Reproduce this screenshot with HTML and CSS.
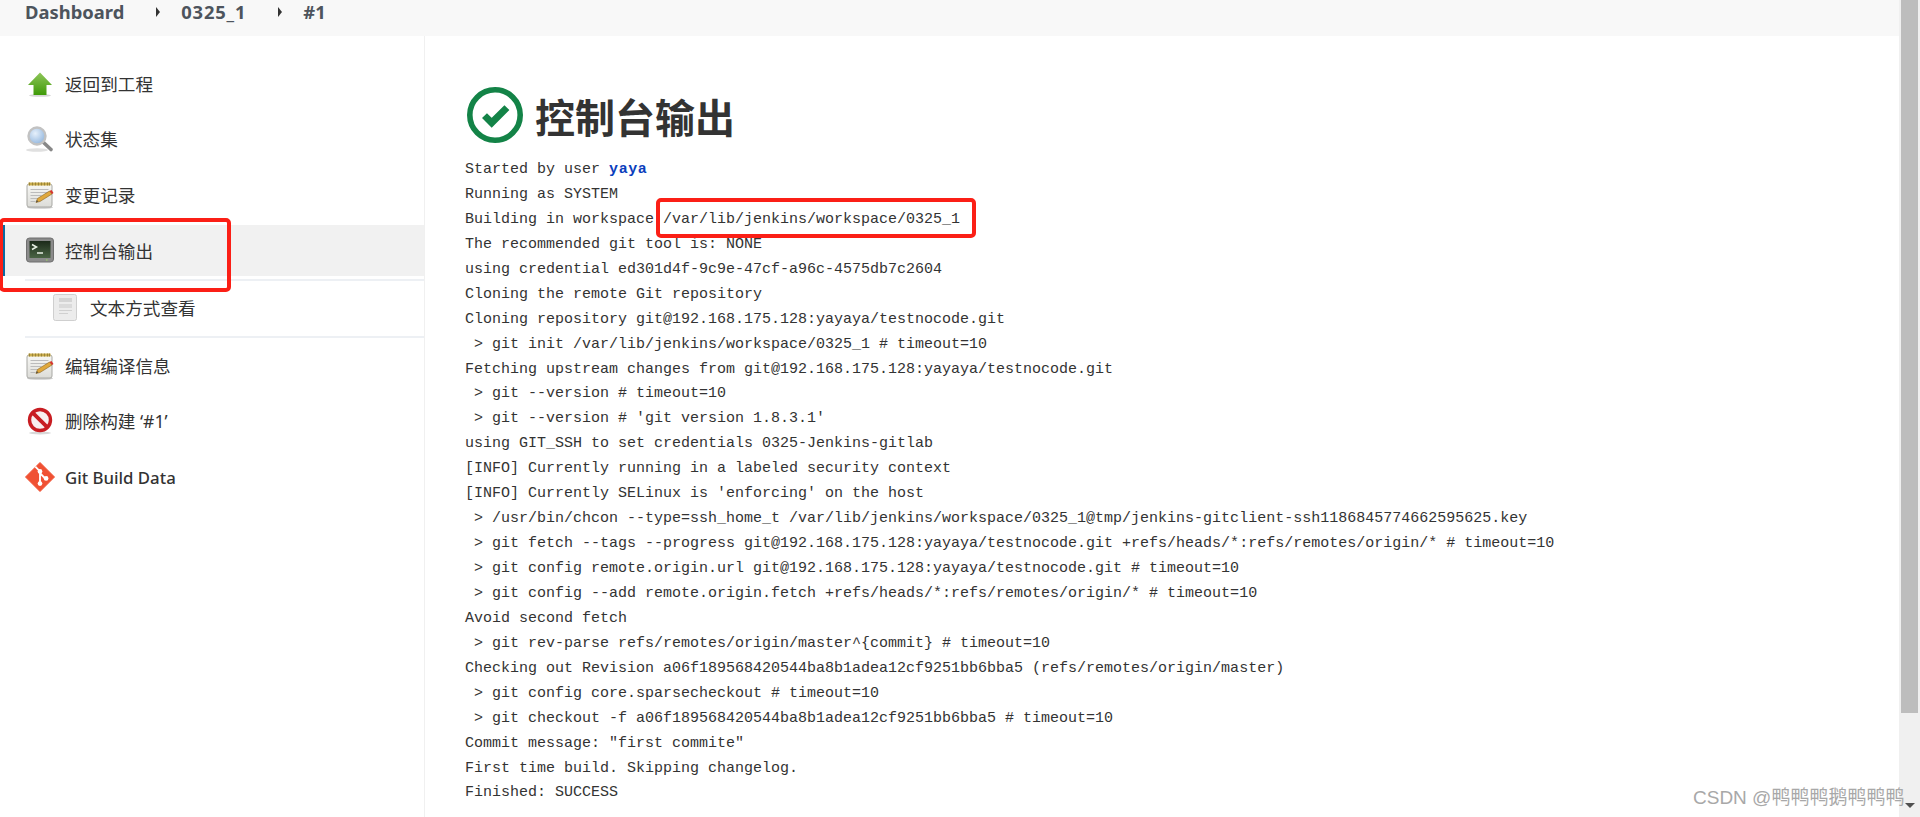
FILE: index.html
```html
<!DOCTYPE html>
<html lang="zh-CN">
<head>
<meta charset="utf-8">
<title>控制台输出</title>
<link rel="stylesheet" href="styles.css">
</head>
<body>
<svg class="defs" width="0" height="0" aria-hidden="true">
  <defs>
    <linearGradient id="paper" x1="0" y1="0" x2="0" y2="1"><stop offset="0" stop-color="#f8f8f5"/><stop offset="1" stop-color="#dcdcd8"/></linearGradient>
    <symbol id="note" viewBox="0 0 28 28">
      <ellipse cx="14" cy="26.500" rx="13" ry="1.300" fill="#ccc"/>
      <rect x="1" y="3" width="25" height="23" rx="2" fill="url(#paper)" stroke="#a8a8a4"/>
      <rect x="2.500" y="1.500" width="22" height="3" fill="#c9ac4c"/>
      <path d="M3.500 1.500v3M6.500 1.500v3M9.500 1.500v3M12.500 1.500v3M15.500 1.500v3M18.500 1.500v3M21.500 1.500v3M23.500 1.500v3" stroke="#8d7a34" stroke-width=".8"/>
      <path d="M4.500 8.500h18M4.500 11.500h18M4.500 14.500h11M4.500 17.500h7M4.500 20.500h5" stroke="#bcbcbc"/>
      <path d="M10 21.500l1.500-4L23.500 10l2.500 3-12 7.500z" fill="#e0a83c" stroke="#8a6420" stroke-width=".6"/>
      <path d="M23.500 10l2.500 3 1.500-1-2-3z" fill="#d8322c"/>
      <path d="M10 21.500l.8-2.200 1.600 1z" fill="#444"/>
    </symbol>
  </defs>
</svg>
<div class="page">
  <div class="viewport">
    <nav class="crumbs">
      <a class="crumb">Dashboard</a>
      <span class="caret"></span>
      <a class="crumb num">0325_1</a>
      <span class="caret"></span>
      <a class="crumb">#1</a>
    </nav>
    <div class="layout">
      <aside class="sidebar">
        <a class="item">
          <svg class="icon" viewBox="0 0 28 28">
            <defs><linearGradient id="up" x1="0" y1="0" x2="0" y2="1"><stop offset="0" stop-color="#8fc65a"/><stop offset="1" stop-color="#3f9a08"/></linearGradient></defs>
            <ellipse cx="14" cy="25.500" rx="11" ry="1.300" fill="#d5d5d5"/>
            <path d="M14 2.500L26 15H20.500V25H7.500V15H2z" fill="url(#up)"/>
          </svg>
          <span>返回到工程</span>
        </a>
        <a class="item">
          <svg class="icon" viewBox="0 0 28 28">
            <defs><radialGradient id="lens" cx=".4" cy=".35" r=".7"><stop offset="0" stop-color="#e6f0fb"/><stop offset="1" stop-color="#8fb4dd"/></radialGradient></defs>
            <ellipse cx="11" cy="25" rx="11" ry="1.800" fill="#e0e0e0"/>
            <path d="M17.500 17.500L25 24.500" stroke="#888" stroke-width="3.600" stroke-linecap="round"/>
            <circle cx="11" cy="11" r="8.500" fill="url(#lens)" stroke="#c2c2c2" stroke-width="2.400"/>
          </svg>
          <span>状态集</span>
        </a>
        <a class="item">
          <svg class="icon"><use href="#note"/></svg>
          <span>变更记录</span>
        </a>
        <a class="item active">
          <svg class="icon" viewBox="0 0 28 28">
            <defs><linearGradient id="scr" x1="0" y1="0" x2="0" y2="1"><stop offset="0" stop-color="#1c2a1a"/><stop offset="1" stop-color="#4a6444"/></linearGradient></defs>
            <rect x="0.500" y="1" width="27" height="24" rx="3" fill="#8b8b8b" stroke="#6f6f6f"/>
            <rect x="3.500" y="4" width="21" height="17" fill="url(#scr)"/>
            <path d="M6 7.500l4.500 2.500-4.500 2.500" fill="none" stroke="#e8f0e4" stroke-width="1.500"/>
            <path d="M11 16h6" stroke="#e8f0e4" stroke-width="1.500"/>
            <rect x="20" y="22.500" width="1.500" height="1" fill="#9be05a"/>
          </svg>
          <span>控制台输出</span>
        </a>
        <div class="subgroup">
          <a class="item sub">
            <svg class="icon doc" viewBox="0 0 24 28">
              <rect x="0.500" y="0.500" width="23" height="26" rx="2" fill="#ececec" stroke="#cfcfcf"/>
              <rect x="6" y="4" width="13" height="4" fill="#d4d4d4"/>
              <rect x="6" y="10" width="13" height="4" fill="#dadada"/>
              <path d="M6 16.500h13M6 19.500h9" stroke="#d0d0d0"/>
            </svg>
            <span>文本方式查看</span>
          </a>
        </div>
        <a class="item">
          <svg class="icon"><use href="#note"/></svg>
          <span>编辑编译信息</span>
        </a>
        <a class="item">
          <svg class="icon" viewBox="0 0 28 28">
            <ellipse cx="14" cy="26" rx="11" ry="1.500" fill="#d8d8d8"/>
            <circle cx="14" cy="13" r="10.500" fill="#f8eeee" stroke="#c81d22" stroke-width="3.400"/>
            <path d="M6.800 5.800L21.200 20.200" stroke="#c81d22" stroke-width="3.800"/>
          </svg>
          <span>删除构建 ‘#1’</span>
        </a>
        <a class="item">
          <svg class="icon git" viewBox="0 0 32 32">
            <path d="M16 .5L31.500 16 16 31.500 .5 16z" fill="#f05133" stroke="#f05133" stroke-linejoin="round" stroke-width="1"/>
            <path d="M11 5l5 5M16 10v12M16 12l6 6" fill="none" stroke="#fff" stroke-width="2"/>
            <circle cx="16" cy="10" r="2.500" fill="#fff"/>
            <circle cx="16" cy="23" r="2.500" fill="#fff"/>
            <circle cx="22.500" cy="17.500" r="2.500" fill="#fff"/>
          </svg>
          <span class="latin">Git Build Data</span>
        </a>
      </aside>
      <main class="content">
        <h1 class="title">
          <svg class="status" viewBox="0 0 56 56">
            <circle cx="28" cy="28" r="25.200" fill="none" stroke="#138347" stroke-width="5.600"/>
            <path d="M17.500 28.600l7.200 7.200 15.200-15.200" fill="none" stroke="#138347" stroke-width="7"/>
          </svg>
          <span>控制台输出</span>
        </h1>
<pre class="console">Started by user <a class="user">yaya</a>
Running as SYSTEM
Building in workspace /var/lib/jenkins/workspace/0325_1
The recommended git tool is: NONE
using credential ed301d4f-9c9e-47cf-a96c-4575db7c2604
Cloning the remote Git repository
Cloning repository git@192.168.175.128:yayaya/testnocode.git
 &gt; git init /var/lib/jenkins/workspace/0325_1 # timeout=10
Fetching upstream changes from git@192.168.175.128:yayaya/testnocode.git
 &gt; git --version # timeout=10
 &gt; git --version # 'git version 1.8.3.1'
using GIT_SSH to set credentials 0325-Jenkins-gitlab
[INFO] Currently running in a labeled security context
[INFO] Currently SELinux is 'enforcing' on the host
 &gt; /usr/bin/chcon --type=ssh_home_t /var/lib/jenkins/workspace/0325_1@tmp/jenkins-gitclient-ssh1186845774662595625.key
 &gt; git fetch --tags --progress git@192.168.175.128:yayaya/testnocode.git +refs/heads/*:refs/remotes/origin/* # timeout=10
 &gt; git config remote.origin.url git@192.168.175.128:yayaya/testnocode.git # timeout=10
 &gt; git config --add remote.origin.fetch +refs/heads/*:refs/remotes/origin/* # timeout=10
Avoid second fetch
 &gt; git rev-parse refs/remotes/origin/master^{commit} # timeout=10
Checking out Revision a06f189568420544ba8b1adea12cf9251bb6bba5 (refs/remotes/origin/master)
 &gt; git config core.sparsecheckout # timeout=10
 &gt; git checkout -f a06f189568420544ba8b1adea12cf9251bb6bba5 # timeout=10
Commit message: "first commite"
First time build. Skipping changelog.
Finished: SUCCESS</pre>
      </main>
    </div>
    <div class="mark mark-side"></div>
    <div class="mark mark-path"></div>
  </div>
  <div class="scrollbar">
    <div class="thumb"></div>
    <div class="arrow"></div>
  </div>
  <div class="watermark">CSDN @鸭鸭鸭鹅鸭鸭鸭</div>
</div>
</body>
</html>
```
FILE: styles.css
```css
* { box-sizing: border-box; }
html, body { margin: 0; height: 100%; overflow: hidden; background: #fff; }
body { font-family: "Noto Sans", "Noto Sans CJK SC", sans-serif; color: #333; }
.defs { position: absolute; }
.page { position: relative; display: flex; height: 817px; }
.viewport { position: relative; flex: 1; min-width: 0; overflow: hidden; }
.crumbs { display: flex; align-items: center; height: 36px; padding: 0 0 13px 25px; background: #f8f8f8; font-size: 18.4px; font-weight: 700; color: #4d545d; }
.crumb { line-height: 24px; }
.num { letter-spacing: .8px; }
.caret { width: 0; height: 0; margin: 0 21px 0 32px; border-left: 4px solid #333; border-top: 5px solid transparent; border-bottom: 5px solid transparent; }
.layout { display: flex; height: 781px; }
.sidebar { display: flex; flex-direction: column; width: 425px; flex: none; padding-top: 20px; border-right: 1px solid #f0f0f0; }
.item { display: flex; align-items: center; gap: 11px; height: 55.5px; flex: none; padding-left: 26px; font-size: 17.6px; line-height: 24px; color: #333; }
.item.active { background: #f1f1f1; border-left: 2px solid #0b6aa2; margin-left: 3px; padding-left: 21px; height: 51px; margin-top: 2.5px; }
.icon { width: 28px; height: 28px; flex: none; }
.git { width: 30px; height: 30px; margin-left: -1px; margin-right: -1px; }
.latin { font-weight: 500; font-size: 16.8px; margin-top: 2px; }
.subgroup { margin: 3px 0 0 25px; border-top: 2px solid #edf0f4; border-bottom: 2px solid #edf0f4; height: 59px; flex: none; }
.item.sub { padding-left: 28px; height: 54px; gap: 13px; }
.doc { width: 24px; height: 28px; }
.content { flex: 1; min-width: 0; padding: 51px 0 0 40px; }
.title { display: flex; align-items: center; gap: 12px; margin: 0; height: 56px; padding-left: 2px; font-size: 40px; font-weight: 700; color: #333; line-height: 56px; }
.title span { margin-top: 6px; }
.status { width: 56px; height: 56px; flex: none; }
.console { margin: 15px 0 0; font-family: "Liberation Mono", "Noto Sans CJK SC", monospace; font-size: 15px; line-height: 24.93px; color: #333; white-space: pre; }
.user { color: #0b3ebd; font-weight: 700; letter-spacing: .6px; }
.mark { position: absolute; border: 4px solid #fb1f16; border-radius: 5px; }
.mark-side { left: -1px; top: 218px; width: 232px; height: 74px; }
.mark-path { left: 656px; top: 198px; width: 320px; height: 40px; }
.watermark { position: absolute; left: 1693px; top: 786px; font-family: "Liberation Sans", "Noto Sans CJK SC", sans-serif; font-size: 19px; line-height: 24px; color: #a8a8a8; white-space: nowrap; }
.scrollbar { position: relative; flex: none; width: 21px; background: #f0f0f0; }
.thumb { width: 17px; height: 713px; margin-left: 2px; background: #bdbdbd; }
.arrow { position: absolute; left: 6px; bottom: 9px; width: 0; height: 0; border-top: 5px solid #505050; border-left: 5px solid transparent; border-right: 5px solid transparent; }
```
